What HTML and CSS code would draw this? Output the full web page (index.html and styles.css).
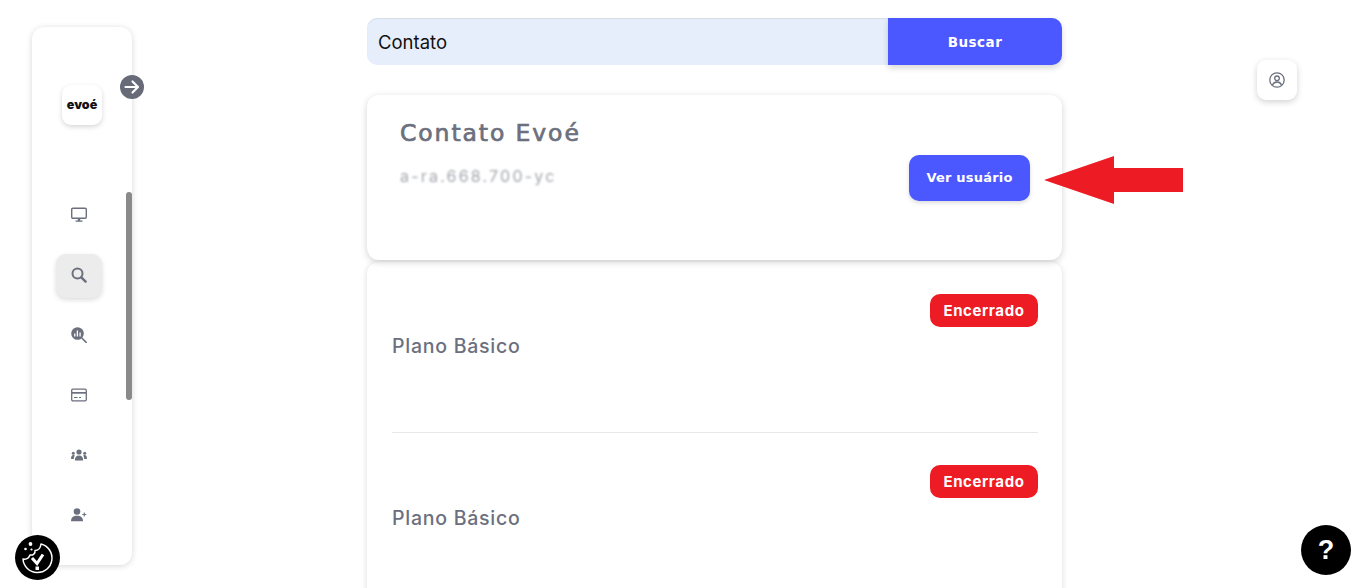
FILE: index.html
```html
<!DOCTYPE html>
<html lang="pt-BR">
<head>
<meta charset="utf-8">
<title>Busca</title>
<link rel="stylesheet" href="styles.css">
</head>
<body>
<div class="page">
  <aside class="sidebar">
    <div class="logo"><span>evoé</span></div>
    <button class="toggle" aria-label="Expandir">
      <svg viewBox="0 0 24 24" width="24" height="24"><circle cx="12" cy="12" r="12" fill="#676b78"/><path d="M5.500 12h12M12.500 6.500l5.500 5.500-5.500 5.500" fill="none" stroke="#fff" stroke-width="2.200" stroke-linecap="round" stroke-linejoin="round"/></svg>
    </button>
    <nav class="nav">
      <a class="nav-item"><svg viewBox="0 0 16 16" width="16" height="16"><rect x="0.700" y="1.200" width="14.600" height="10.100" rx="1.200" fill="none" stroke="#6c6f7d" stroke-width="1.400"/><path d="M6.800 11.500h2.400v2H11.500v1.300H4.500v-1.300h2.300z" fill="#6c6f7d"/></svg></a>
      <a class="nav-item active"><svg viewBox="0 0 16 16" width="16" height="16"><circle cx="6.500" cy="6.500" r="5" fill="none" stroke="#6c6f7d" stroke-width="2"/><path d="M10.300 10.300l4.300 4.300" stroke="#6c6f7d" stroke-width="2.400" stroke-linecap="round"/></svg></a>
      <a class="nav-item"><svg viewBox="0 0 16 16" width="16" height="16"><circle cx="6.500" cy="6.500" r="6.300" fill="#6c6f7d"/><path d="M10.800 11l4.400 4.400" stroke="#6c6f7d" stroke-width="1.500" stroke-linecap="round"/><path d="M3.800 6.500v3M6.400 3.500v6M9.100 5.500v4" stroke="#fff" stroke-width="1.300"/></svg></a>
      <a class="nav-item"><svg viewBox="0 0 16 16" width="16" height="16"><rect x="0.700" y="2.200" width="14.600" height="11.600" rx="1.200" fill="none" stroke="#6c6f7d" stroke-width="1.300"/><path d="M1 5h14v1.700H1z" fill="#6c6f7d"/><path d="M3 10.500h3.500M8 10.500h2" stroke="#6c6f7d" stroke-width="1.100"/></svg></a>
      <a class="nav-item"><svg viewBox="0 0 16 16" width="16" height="16"><circle cx="8" cy="5" r="2.600" fill="#6c6f7d"/><path d="M3.800 13.500c0-3.200 1.600-5 4.200-5s4.200 1.800 4.200 5z" fill="#6c6f7d"/><circle cx="2.300" cy="6.300" r="1.500" fill="#6c6f7d"/><circle cx="13.700" cy="6.300" r="1.500" fill="#6c6f7d"/><path d="M0 12c0-2.500.8-4 2.400-4 .6 0 1 .2 1.300.4-.6 1-.9 2.200-.9 3.600zM16 12c0-2.500-.8-4-2.400-4-.6 0-1 .2-1.300.4.600 1 .9 2.200.9 3.600z" fill="#6c6f7d"/></svg></a>
      <a class="nav-item"><svg viewBox="0 0 16 16" width="16" height="16"><circle cx="6" cy="4.500" r="3.300" fill="#6c6f7d"/><path d="M0 14.200c0-3.600 2.400-5.400 6-5.400s6 1.800 6 5.400z" fill="#6c6f7d"/><path d="M13.300 5.500v4M11.300 7.500h4" stroke="#6c6f7d" stroke-width="1.100"/></svg></a>
    </nav>
    <div class="scrollbar"></div>
  </aside>

  <main class="content">
    <form class="search">
      <div class="search-input">Contato</div>
      <button class="search-btn" type="button">Buscar</button>
    </form>

    <section class="contact-card">
      <div class="contact-info">
        <h1>Contato Evoé</h1>
        <p class="masked">a-ra.668.700-yc</p>
      </div>
      <button class="user-btn" type="button">Ver usuário</button>
    </section>

    <section class="plans">
      <article class="plan">
        <div class="plan-head"><span class="pill">Encerrado</span></div>
        <h2>Plano Básico</h2>
      </article>
      <article class="plan">
        <div class="plan-head"><span class="pill">Encerrado</span></div>
        <h2>Plano Básico</h2>
      </article>
    </section>
  </main>

  <svg class="arrow" viewBox="0 0 139 48" width="139" height="48"><path d="M0 24L70 0V12H139V36H70V48Z" fill="#ed1c24"/></svg>

  <a class="profile" aria-label="Perfil">
    <svg viewBox="0 0 16 16" width="16" height="16"><circle cx="8" cy="8" r="7.200" fill="none" stroke="#6c6f7d" stroke-width="1.300"/><circle cx="8" cy="6.300" r="2.300" fill="none" stroke="#6c6f7d" stroke-width="1.300"/><path d="M3.500 13c.8-2 2.400-3 4.500-3s3.700 1 4.500 3" fill="none" stroke="#6c6f7d" stroke-width="1.300"/></svg>
  </a>

  <a class="cookie" aria-label="Cookies">
    <svg viewBox="0 0 45 45" width="45" height="45"><circle cx="22.500" cy="22.500" r="22.500" fill="#000"/><path d="M26 9a14.500 14.500 0 1 1-18 15c3 .5 6-1 7-4 3 .5 5.500-1.500 5-4.500 3 0 5.500-2.500 6-6.500z" fill="none" stroke="#fff" stroke-width="1.500" stroke-linejoin="round"/><circle cx="15.500" cy="9" r="1.900" fill="#fff"/><circle cx="10.500" cy="14" r="1.300" fill="#fff"/><circle cx="16.500" cy="14.500" r="1.100" fill="#fff"/><path d="M17 23l5 5.500 6-9" fill="none" stroke="#fff" stroke-width="3"/><rect x="20.500" y="31.500" width="3.500" height="3.500" fill="#fff"/></svg>
  </a>

  <a class="help" aria-label="Ajuda">?</a>
</div>
</body>
</html>
```
FILE: styles.css
```css
* { box-sizing: border-box; }
html, body { margin: 0; height: 100%; }
body { background: #fff; font-family: "Inter", "Liberation Sans", sans-serif; overflow: hidden; }
.page { position: relative; display: flex; align-items: flex-start; height: 588px; overflow: hidden; }

.sidebar { position: relative; flex: none; width: 100px; height: 538px; margin: 27px 0 0 32px; padding-top: 58px; background: #fff; border-radius: 12px; box-shadow: 0 1px 6px rgba(0,0,0,.16); display: flex; flex-direction: column; align-items: center; }
.logo { width: 40px; height: 40px; border-radius: 9px; background: #fff; box-shadow: 0 2px 5px rgba(0,0,0,.16); display: flex; align-items: center; justify-content: center; padding-bottom: 2px; }
.logo span { font-family: "Inter", sans-serif; font-weight: 900; font-size: 12.500px; color: #111; }
.toggle { position: absolute; left: 88px; top: 48px; width: 24px; height: 24px; padding: 0; border: 0; background: none; line-height: 0; }
.nav { display: flex; flex-direction: column; gap: 16px; margin-top: 69px; width: 46px; margin-right: 6px; }
.nav-item { height: 44px; padding-bottom: 2px; display: flex; align-items: center; justify-content: center; border-radius: 10px; }
.nav-item.active { background: #ececec; box-shadow: 0 2px 5px rgba(0,0,0,.14); }
.scrollbar { position: absolute; right: 0; top: 165px; width: 6px; height: 208px; background: #8a8a8a; border-radius: 3px; }

.content { flex: none; width: 695px; margin: 18px 0 0 235px; }
.search { display: flex; height: 47px; border-radius: 10px; }
.search-input { flex: 1; background: #e7eefb; border-radius: 10px 0 0 10px; padding-left: 11px; display: flex; align-items: center; font-family: "Inter", sans-serif; font-size: 18.500px; color: #111; box-shadow: inset 0 1px 1px rgba(0,0,0,.08); }
.search-btn { flex: none; width: 174px; border: 0; background: #4b57ff; border-radius: 0 10px 10px 0; color: #fff; font-family: "DejaVu Sans", sans-serif; font-weight: 700; font-size: 13.500px; letter-spacing: .5px; box-shadow: 0 3px 6px rgba(0,0,0,.16); }

.contact-card { position: relative; z-index: 1; margin-top: 30px; height: 165px; padding: 24px 32px 0 33px; display: flex; justify-content: space-between; align-items: flex-start; background: #fff; border-radius: 12px; box-shadow: 0 2px 7px rgba(0,0,0,.18); }
.contact-info h1 { margin: 0; font-family: "DejaVu Sans", sans-serif; font-weight: 400; font-size: 23.500px; line-height: 28px; letter-spacing: 1.900px; -webkit-text-stroke: .7px #6c6f7d; color: #6c6f7d; }
.masked { margin: 19px 0 0; font-family: "Inter", sans-serif; font-size: 16px; line-height: 20px; letter-spacing: 2.200px; color: #a5a7ae; filter: blur(.8px); }
.user-btn { margin-top: 36px; padding-bottom: 2px; width: 121px; height: 46px; border: 0; border-radius: 10px; background: #4b57ff; color: #fff; font-family: "DejaVu Sans", sans-serif; font-weight: 700; font-size: 13px; letter-spacing: .2px; box-shadow: 0 2px 4px rgba(0,0,0,.14); }

.plans { margin-top: 2px; padding: 32px 24px 0 25px; height: 340px; background: #fff; border-radius: 12px; box-shadow: 0 1px 6px rgba(0,0,0,.14); }
.plan { height: 139px; border-bottom: 1px solid #e8e8e8; margin-bottom: 32px; }
.plan:last-child { border-bottom: 0; margin-bottom: 0; }
.plan:last-child h2 { margin-top: 7px; }
.plan-head { display: flex; justify-content: flex-end; }
.pill { width: 108px; height: 33px; border-radius: 10px; background: #ed1c24; color: #fff; display: flex; align-items: center; justify-content: center; font-family: "Inter", sans-serif; font-weight: 700; font-size: 15px; letter-spacing: .6px; }
.plan h2 { margin: 6px 0 0; font-family: "Inter", sans-serif; font-weight: 500; font-size: 19.500px; line-height: 26px; letter-spacing: .75px; color: #6c6f7d; }

.arrow { position: absolute; z-index: 2; left: 1044px; top: 156px; }
.profile { position: absolute; left: 1257px; top: 60px; width: 40px; height: 40px; background: #fff; border-radius: 9px; box-shadow: 0 2px 6px rgba(0,0,0,.18); display: flex; align-items: center; justify-content: center; }
.cookie { position: absolute; left: 15px; top: 535px; width: 45px; height: 45px; line-height: 0; }
.help { position: absolute; left: 1301px; top: 525px; width: 50px; height: 50px; background: #000; border-radius: 50%; color: #fff; display: flex; align-items: center; justify-content: center; font-family: "Liberation Sans", sans-serif; font-weight: 700; font-size: 27px; }
```
